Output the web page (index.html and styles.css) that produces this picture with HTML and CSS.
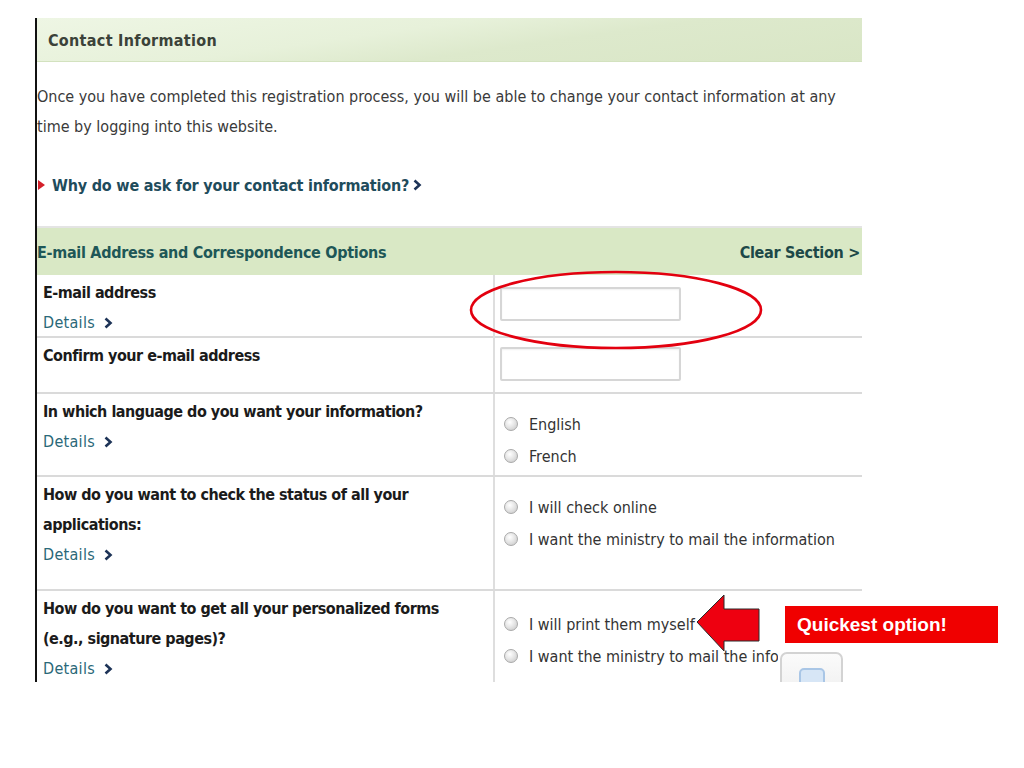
FILE: index.html
```html
<!DOCTYPE html>
<html lang="en">
<head>
  <meta charset="UTF-8" />
  <title>Contact Information</title>
  <link rel="stylesheet" href="styles.css">
</head>
<body>

  <div class="slide">
    <div class="frame">

      <div class="section-head">Contact Information</div>

      <p class="intro">Once you have completed this registration process, you will be able to change your contact information at any<br>time by logging into this website.</p>

      <a class="why" href="#">
        <span class="bullet"></span>Why do we ask for your contact information?
        <svg class="chev" width="9" height="12" viewBox="0 0 9 12"><path d="M1.5 1.5 L6.5 6 L1.5 10.5" /></svg>
      </a>

      <div class="form-table">
        <div class="table-head">
          <span>E-mail Address and Correspondence Options</span>
          <a class="clear" href="#">Clear Section &gt;</a>
        </div>

        <div class="row row-email">
          <div class="q">
            <div class="label">E-mail address</div>
            <a class="details" href="#">Details <svg class="chev" width="9" height="12" viewBox="0 0 9 12"><path d="M1.5 1.5 L6.5 6 L1.5 10.5" /></svg></a>
          </div>
          <div class="a a-input"><input type="text" class="field"></div>
        </div>

        <div class="row row-confirm">
          <div class="q">
            <div class="label">Confirm your e-mail address</div>
          </div>
          <div class="a a-input"><input type="text" class="field"></div>
        </div>

        <div class="row row-lang">
          <div class="q">
            <div class="label">In which language do you want your information?</div>
            <a class="details" href="#">Details <svg class="chev" width="9" height="12" viewBox="0 0 9 12"><path d="M1.5 1.5 L6.5 6 L1.5 10.5" /></svg></a>
          </div>
          <div class="a">
            <label class="opt"><span class="radio"></span>English</label>
            <label class="opt"><span class="radio"></span>French</label>
          </div>
        </div>

        <div class="row row-status">
          <div class="q">
            <div class="label">How do you want to check the status of all your<br>applications:</div>
            <a class="details" href="#">Details <svg class="chev" width="9" height="12" viewBox="0 0 9 12"><path d="M1.5 1.5 L6.5 6 L1.5 10.5" /></svg></a>
          </div>
          <div class="a">
            <label class="opt"><span class="radio"></span>I will check online</label>
            <label class="opt"><span class="radio"></span>I want the ministry to mail the information</label>
          </div>
        </div>

        <div class="row row-forms">
          <div class="q">
            <div class="label">How do you want to get all your personalized forms<br>(e.g., signature pages)?</div>
            <a class="details" href="#">Details <svg class="chev" width="9" height="12" viewBox="0 0 9 12"><path d="M1.5 1.5 L6.5 6 L1.5 10.5" /></svg></a>
          </div>
          <div class="a a-forms">
            <label class="opt"><span class="radio"></span>I will print them myself</label>
            <label class="opt"><span class="radio"></span>I want the ministry to mail the information</label>
          </div>
        </div>
      </div>

      <!-- annotations drawn over the form -->
      <svg class="ring" width="296" height="82" viewBox="0 0 296 82">
        <ellipse cx="148" cy="41" rx="145" ry="38" />
      </svg>

      <svg class="arrow" width="66" height="60" viewBox="0 0 66 60">
        <polygon points="1,28 28,1 28,15 63,15 63,47 28,47 28,57" />
      </svg>

      <div class="pop-cover">
        <div class="pop-btn"><span class="pop-icon"></span></div>
      </div>
    </div>

    <div class="callout">Quickest option!</div>
  </div>

</body>
</html>
```

FILE: styles.css
```css
body {
  margin: 0;
  background: #fff;
  font-family: "DejaVu Sans Condensed", "Liberation Sans", sans-serif;
  font-size: 16px;
  color: #333;
}

.slide {
  position: relative;
  width: 1024px;
  height: 768px;
  padding: 18px 0 0 35px;
  box-sizing: border-box;
}

.frame {
  position: relative;
  width: 827px;
  height: 664px;
  border-left: 2px solid #111;
  box-sizing: border-box;
  overflow: hidden;
}

.section-head {
  height: 44px;
  line-height: 46px;
  padding-left: 11px;
  font-weight: bold;
  letter-spacing: 0.3px;
  color: #3b4239;
  background: linear-gradient(172deg, #eef6e4 0%, #e7f1da 40%, #dde9cc 60%, #d9e6c6 100%);
  border-bottom: 1px solid #d3e2bf;
  box-sizing: border-box;
}

.intro {
  margin: 20px 0 0;
  line-height: 30px;
  color: #3a3a3a;
}

.why {
  display: flex;
  align-items: center;
  margin-top: 28px;
  height: 30px;
  font-weight: bold;
  letter-spacing: -0.2px;
  color: #1f4c5c;
  text-decoration: none;
}

.bullet {
  width: 0;
  height: 0;
  margin: 0 7px 0 1px;
  border-top: 5px solid transparent;
  border-bottom: 5px solid transparent;
  border-left: 7px solid #d4202a;
}

.chev {
  margin-left: 4px;
  vertical-align: -1px;
}

.chev path {
  fill: none;
  stroke: #1d3357;
  stroke-width: 2.6;
}

.form-table {
  margin-top: 26px;
}

.table-head {
  display: flex;
  justify-content: space-between;
  align-items: center;
  height: 49px;
  padding: 2px 2px 0 0;
  border-top: 2px solid #e4e4e4;
  background: #d9e8c5;
  font-weight: bold;
  letter-spacing: -0.3px;
  color: #1e5757;
  box-sizing: border-box;
}

.clear {
  color: #1d4848;
  text-decoration: none;
}

.row {
  display: grid;
  grid-template-columns: 456px 1fr;
  border-bottom: 2px solid #dadada;
  box-sizing: border-box;
}

.row-email { height: 63px; }
.row-confirm { height: 56px; }
.row-lang { height: 83px; }
.row-status { height: 114px; }
.row-forms { height: 120px; border-bottom: none; }

.q {
  padding: 3px 0 0 6px;
  line-height: 30px;
}

.label {
  font-weight: bold;
  letter-spacing: -0.5px;
  color: #1b1b1b;
}

.details {
  color: #2a6878;
  letter-spacing: 0.3px;
  text-decoration: none;
}

.a {
  border-left: 2px solid #dedede;
  padding: 14px 0 0 9px;
}

.a-input {
  padding: 12px 0 0 5px;
}

.row-confirm .a-input {
  padding-top: 9px;
}

.a-forms {
  padding-top: 17px;
}

.field {
  display: block;
  width: 181px;
  height: 34px;
  margin: 0;
  border: 2px solid #d6d6d6;
  border-radius: 2px;
  box-shadow: inset 0 1px 2px rgba(0, 0, 0, 0.06);
  box-sizing: border-box;
  background: #fff;
}

.opt {
  display: flex;
  align-items: center;
  height: 32px;
  color: #333;
  white-space: nowrap;
}

.radio {
  width: 12px;
  height: 12px;
  margin-right: 11px;
  border: 1px solid #a9a9a9;
  border-radius: 50%;
  background: radial-gradient(circle at 40% 35%, #ffffff 0%, #e6e6e6 45%, #c4c4c4 100%);
  flex: none;
}

.ring {
  position: absolute;
  left: 431px;
  top: 251px;
}

.ring ellipse {
  fill: none;
  stroke: #e3000f;
  stroke-width: 2.6;
}

.arrow {
  position: absolute;
  left: 659px;
  top: 576px;
}

.arrow polygon {
  fill: #ee0010;
  stroke: #2a2a2a;
  stroke-width: 1;
}

.pop-cover {
  position: absolute;
  left: 741px;
  top: 622px;
  width: 90px;
  height: 50px;
  padding: 12px 0 0 2px;
  background: #fff;
}

.pop-btn {
  width: 63px;
  height: 50px;
  border: 2px solid #d3d3d3;
  border-radius: 7px;
  background: linear-gradient(#fbfbfb, #eeeeee);
  box-sizing: border-box;
}

.pop-icon {
  display: block;
  width: 22px;
  height: 20px;
  margin: 14px auto 0;
  border: 2px solid #a9c6e6;
  border-radius: 5px;
  background: #d7e6f6;
}

.callout {
  position: absolute;
  left: 785px;
  top: 606px;
  width: 213px;
  height: 37px;
  padding-left: 12px;
  line-height: 38px;
  background: #f00000;
  color: #fff;
  font-family: "Liberation Sans", Arial, sans-serif;
  font-size: 19px;
  font-weight: bold;
  box-sizing: border-box;
}
```
